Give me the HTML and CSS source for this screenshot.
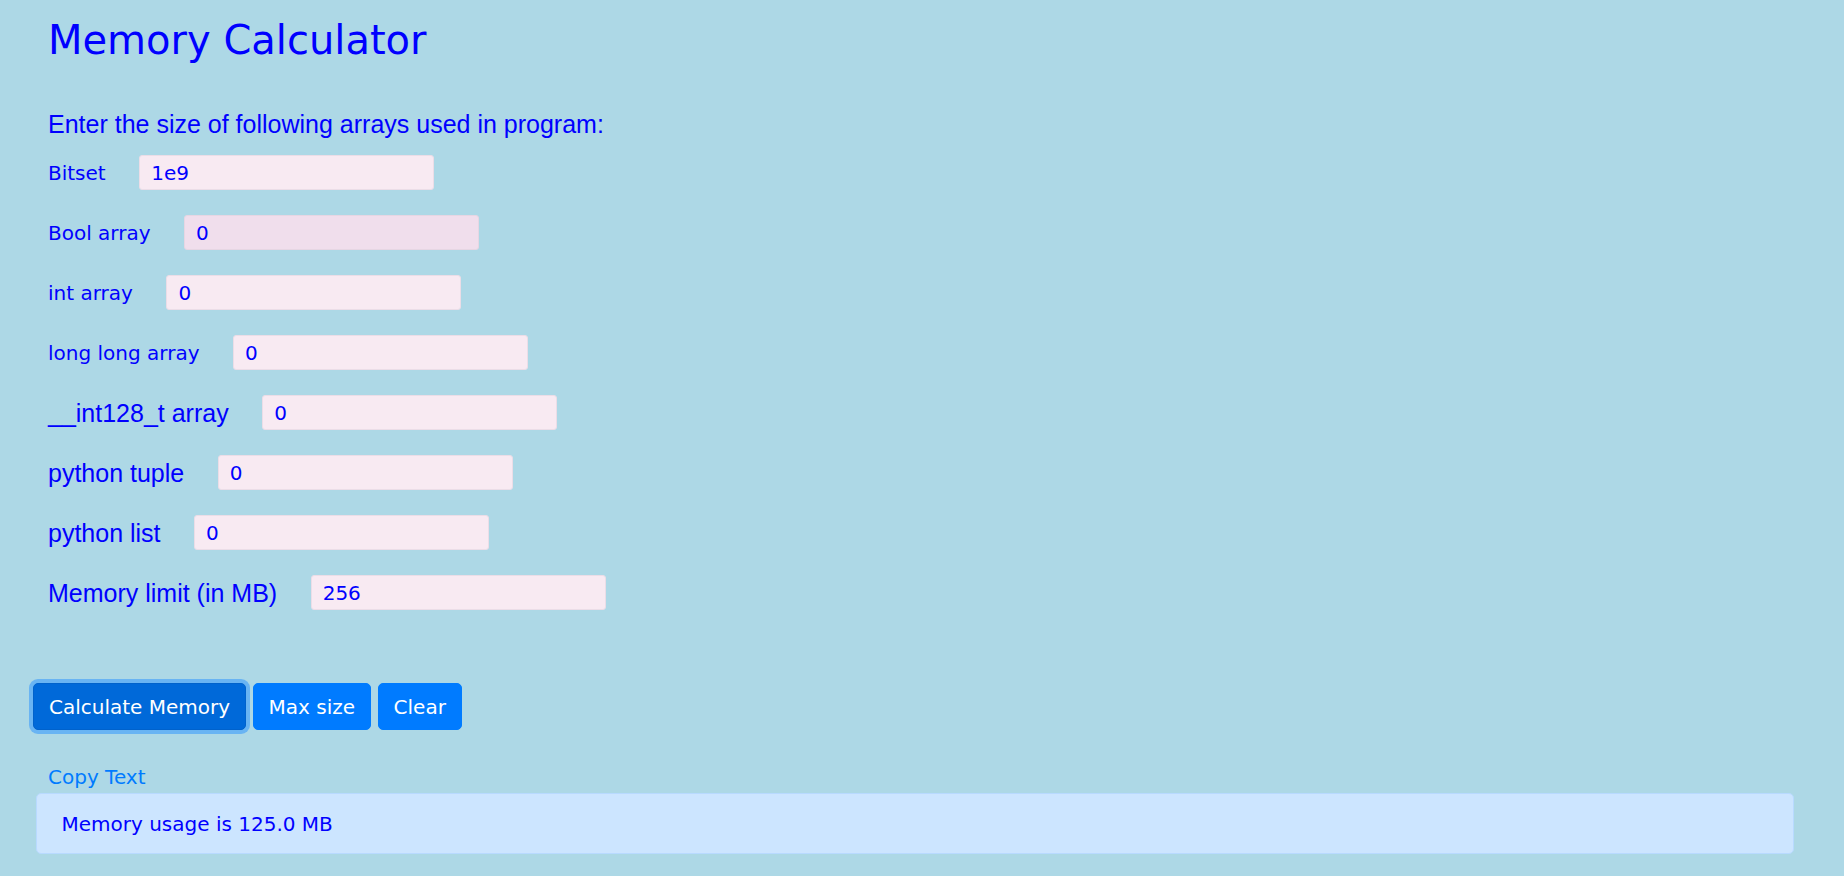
FILE: index.html
```html
<!DOCTYPE html>
<html lang="en">
<head>
<meta charset="utf-8">
<title>Memory Calculator</title>
<link rel="stylesheet" href="styles.css">
</head>
<body>
<div class="page">
  <h1 class="title">Memory Calculator</h1>
  <p class="intro">Enter the size of following arrays used in program:</p>
  <form class="fields">
    <div class="row"><label class="lbl">Bitset</label><input class="field" type="text" value="1e9"></div>
    <div class="row"><label class="lbl">Bool array</label><input class="field field-hover" type="text" value="0"></div>
    <div class="row"><label class="lbl">int array</label><input class="field" type="text" value="0"></div>
    <div class="row"><label class="lbl">long long array</label><input class="field" type="text" value="0"></div>
    <div class="row"><label class="lbl lbl-big">__int128_t array</label><input class="field" type="text" value="0"></div>
    <div class="row"><label class="lbl lbl-big">python tuple</label><input class="field" type="text" value="0"></div>
    <div class="row"><label class="lbl lbl-big">python list</label><input class="field" type="text" value="0"></div>
    <div class="row"><label class="lbl lbl-big">Memory limit (in MB)</label><input class="field" type="text" value="256"></div>
  </form>
  <div class="actions">
    <button class="btn btn-focus" type="button">Calculate Memory</button>
    <button class="btn" type="button">Max size</button>
    <button class="btn" type="button">Clear</button>
  </div>
  <a class="copy" href="#">Copy Text</a>
  <div class="alert">Memory usage is 125.0 MB</div>
</div>
</body>
</html>
```
FILE: styles.css
```css
html, body {
  margin: 0;
  padding: 0;
}
body {
  background: #add8e6;
  font-family: "DejaVu Sans", Verdana, sans-serif;
  color: #0000ff;
  font-size: 20px;
}
.page {
  padding: 0 50px 22px 33px;
}
.title {
  margin: 16px 0 0 15px;
  font-size: 40px;
  line-height: 48px;
  font-weight: normal;
  color: #0000ff;
}
.intro {
  margin: 45px 0 0 15px;
  font-family: "Liberation Sans", Arial, sans-serif;
  font-size: 25px;
  line-height: 30px;
}
.fields {
  margin: 16px 0 0 15px;
  display: flex;
  flex-direction: column;
  gap: 25px;
}
.row {
  display: flex;
  align-items: center;
  gap: 33.5px;
  height: 35px;
}
.lbl {
  font-size: 20px;
  line-height: 24px;
  padding-top: 1px;
  color: #0000ff;
}
.lbl-big {
  font-family: "Liberation Sans", Arial, sans-serif;
  font-size: 25px;
  line-height: 28px;
  padding-top: 0;
}
.field {
  box-sizing: border-box;
  width: 295px;
  height: 35px;
  margin: 0;
  padding: 0 11px;
  border: 1px solid #ebdde7;
  border-radius: 3px;
  background: #f8eaf2;
  color: #0000ff;
  font-family: "DejaVu Sans", Verdana, sans-serif;
  font-size: 20px;
  outline: none;
}
.field-hover {
  background: #f0deec;
  border-color: #e6d6e3;
}
.actions {
  margin-top: 73px;
  display: flex;
  gap: 6.5px;
}
.btn {
  box-sizing: border-box;
  height: 47px;
  padding: 0 15px;
  border: 1px solid #007bff;
  border-radius: 5px;
  background: #007bff;
  color: #ffffff;
  font-family: "DejaVu Sans", Verdana, sans-serif;
  font-size: 20px;
  line-height: 30px;
}
.btn-focus {
  background: #0069d9;
  border-color: #0062cc;
  box-shadow: 0 0 0 4px rgba(38, 143, 255, 0.5);
}
.copy {
  display: block;
  margin: 32px 0 0 15px;
  line-height: 30px;
  color: #007bff;
  text-decoration: none;
}
.alert {
  margin: 1px 0 0 2.5px;
  padding: 14.5px 25px;
  border: 1px solid #b8daff;
  border-radius: 5px;
  background: #cce5ff;
  color: #0000ff;
  line-height: 30px;
}
```
